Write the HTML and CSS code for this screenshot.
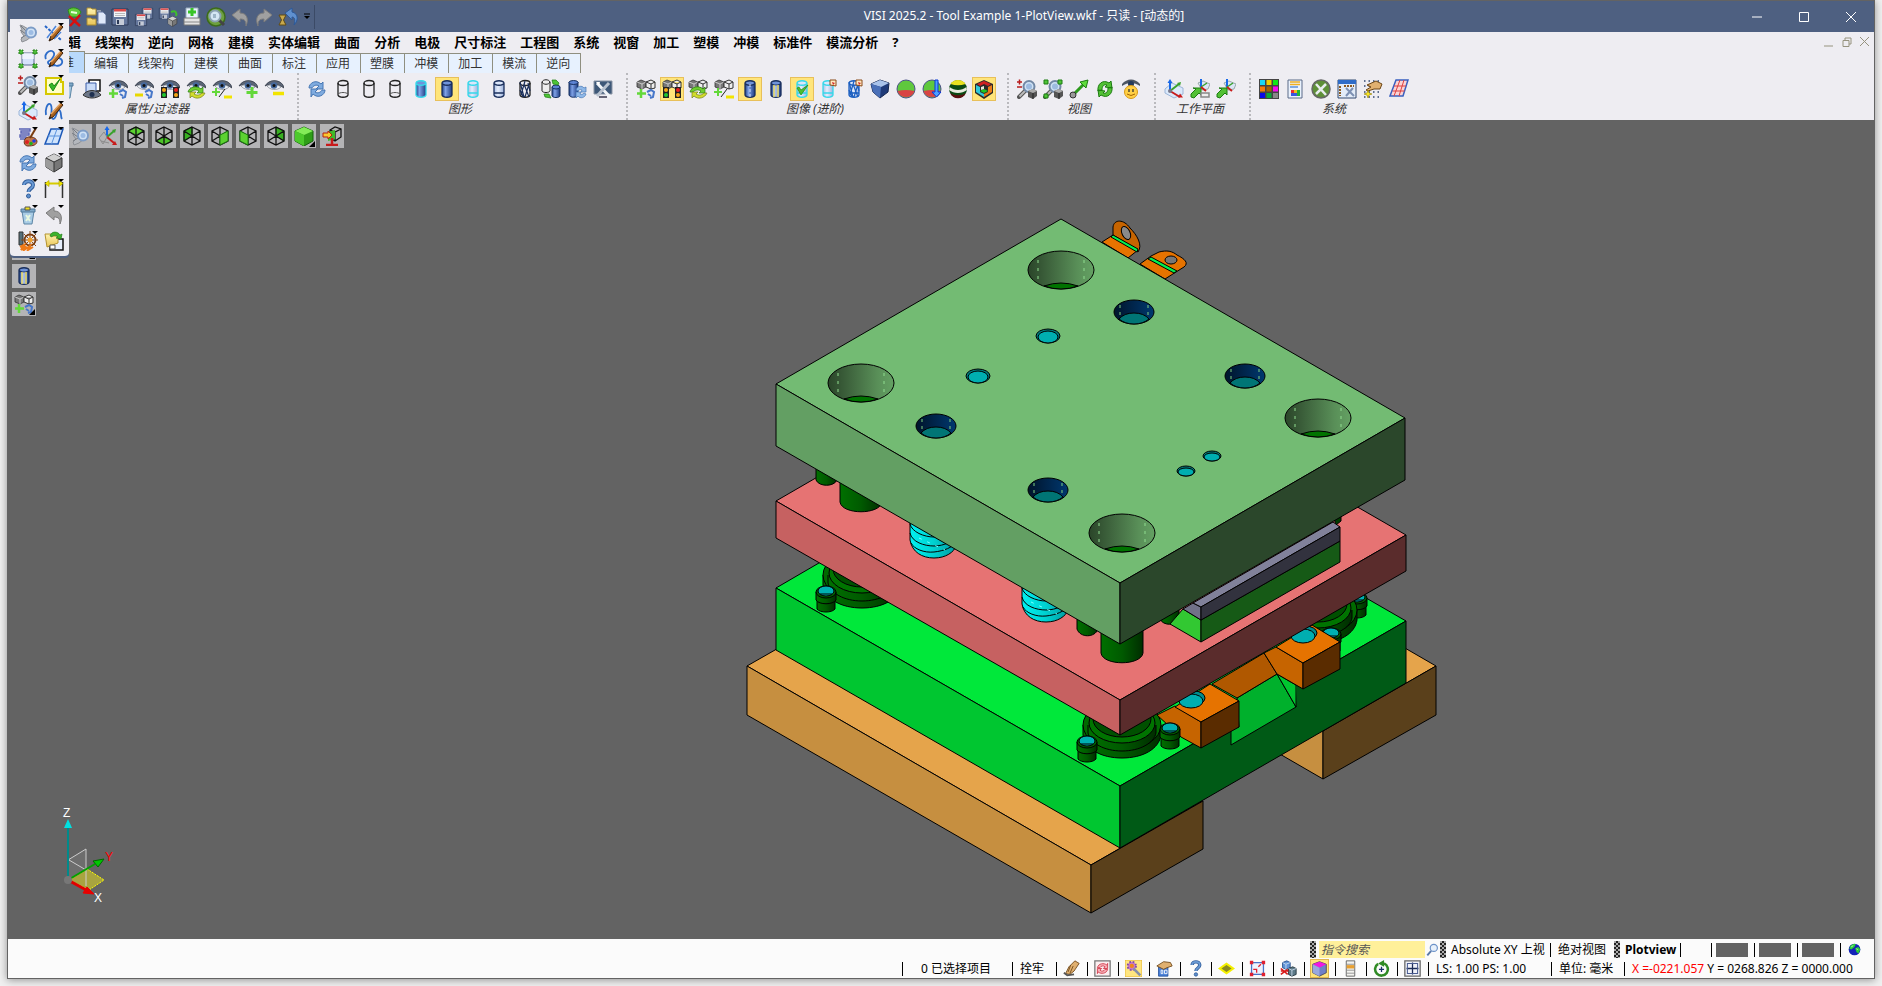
FILE: index.html
```html
<!DOCTYPE html>
<html lang="zh-CN">
<head>
    <meta charset="UTF-8">
    <meta name="viewport" content="width=device-width, initial-scale=1.0">
    <title>VISI 2025.2 - Tool Example 1-PlotView.wkf</title>
    <link rel="stylesheet" href="styles.css">
</head>
<body>

    <!-- Icon sprite -->
    <svg class="sprite" aria-hidden="true">
        <defs>
            <linearGradient id="g-blue"><stop offset="0" stop-color="#1f3f86"/><stop offset=".35" stop-color="#7fa2e6"/><stop offset="1" stop-color="#1c3a80"/></linearGradient>
            <linearGradient id="g-pale"><stop offset="0" stop-color="#a9bde4"/><stop offset=".4" stop-color="#e6eefc"/><stop offset="1" stop-color="#9db3de"/></linearGradient>
            <linearGradient id="g-gray" x2="0" y2="1"><stop offset="0" stop-color="#d5d5d5"/><stop offset="1" stop-color="#707070"/></linearGradient>
            <linearGradient id="g-hole"><stop offset="0" stop-color="#2a4529"/><stop offset=".25" stop-color="#3a5d39"/><stop offset=".75" stop-color="#598f58"/><stop offset="1" stop-color="#64a163"/></linearGradient>
            <linearGradient id="g-well"><stop offset="0" stop-color="#00142b"/><stop offset="1" stop-color="#00386f"/></linearGradient>
            <linearGradient id="g-post"><stop offset="0" stop-color="#007000"/><stop offset=".5" stop-color="#005a00"/><stop offset="1" stop-color="#002d00"/></linearGradient>
            <linearGradient id="g-spring"><stop offset="0" stop-color="#00f0f0"/><stop offset=".5" stop-color="#00d2d2"/><stop offset="1" stop-color="#009aa0"/></linearGradient>
            <linearGradient id="g-folder" x2="0" y2="1"><stop offset="0" stop-color="#fff3b0"/><stop offset="1" stop-color="#e8c558"/></linearGradient>
        </defs>

        <symbol id="i-lens" viewBox="0 0 20 20"><path d="M9 11L2 18" stroke="#555" stroke-width="4" stroke-linecap="round"/><path d="M9 11L2.500 17.500" stroke="#bbb" stroke-width="2"/><circle cx="12" cy="7.500" r="5.500" fill="#cfe2f5" stroke="#7288a5" stroke-width="2"/><circle cx="12" cy="7.500" r="3" fill="#9dbbe0"/></symbol>
        <symbol id="i-hand" viewBox="0 0 20 20"><path d="M2 2l3 1 7 4 2 6-5 4-5 2-1-3 3-3-3-4 1-2z" fill="#b5b8bd" stroke="#8d9095"/><path d="M3 3l6 6M2 7l6 4M3 15l5-3" stroke="#777b82"/><circle cx="13" cy="9.500" r="5" fill="#cfe1f5" stroke="#7d9cc6" stroke-width="2"/><circle cx="13" cy="9.500" r="2.500" fill="#9dbce4"/></symbol>
        <symbol id="i-pencil" viewBox="0 0 20 20"><path d="M17 2l2 2-10 12-4 2 2-5z" fill="#a8621f" stroke="#40220a"/><path d="M17 2L7 13" stroke="#e7a45e" stroke-width="1.500"/><path d="M5 18l1.500-2.500 1 1z" fill="#222"/></symbol>
        <symbol id="i-lines" viewBox="0 0 20 20"><path d="M1 3l16 14" stroke="#2564c8" stroke-width="2" stroke-dasharray="3 1.500"/><path d="M3 15L12 3M10 16l7-7" stroke="#4d86dc" stroke-width="1.500"/></symbol>
        <symbol id="i-loops" viewBox="0 0 20 20"><path d="M2 10c-2-4 2-9 6-8 5 2 0 9-3 10s1 6 6 4M12 9c4-1 7 2 6 5s-7 4-8 1" fill="none" stroke="#2d6cc9" stroke-width="1.800"/></symbol>
        <symbol id="i-wave" viewBox="0 0 20 20"><path d="M2 14c-1-5 1-12 4-11 4 2-1 14 3 15 4 0 3-9 6-9 3 1 1 6 3 9" fill="none" stroke="#2d6cc9" stroke-width="1.800"/></symbol>
        <symbol id="i-fit" viewBox="0 0 20 20"><path d="M4 4h12v12H4z" fill="#d6e2fb" stroke="#5a6c92"/><path d="M4 4h12v6H4z" fill="#fff" opacity=".6"/><path d="M1 1h4v4H1zM15 1h4v4h-4zM1 15h4v4H1zM15 15h4v4h-4z" fill="#4fbd3a" stroke="#237a16" stroke-dasharray="2 1"/></symbol>
        <symbol id="i-minicube" viewBox="0 0 20 20"><path d="M11 12l5-2 4 2v5l-4 3-5-2z" fill="#555"/><path d="M11 12l5-2 4 2-4 2z" fill="#aaa"/><path d="M16 14v6" stroke="#222"/></symbol>
        <symbol id="i-pm" viewBox="0 0 20 20"><path d="M0 3h5M2.500 .5v5M0 8h5" stroke="#b81c1c" stroke-width="1.500"/></symbol>
        <symbol id="i-check" viewBox="0 0 20 20"><path d="M2 3h15v4h2v12H2z" fill="#ffffc8" stroke="#d6c800" stroke-width="2"/><path d="M5 10l4 6 7-12-6 7-2-3z" fill="#38b828" stroke="#1d8a12"/></symbol>
        <symbol id="i-axes" viewBox="0 0 20 20"><path d="M1 10l7-6 11 5v6l-9 4-9-5z" fill="#dbe9fb" stroke="#9cb5d9"/><path d="M6 12V2" stroke="#1868e8" stroke-width="2"/><path d="M3.500 4L6 0l2.500 4z" fill="#1868e8"/><path d="M6 12l9-7" stroke="#3aa22c" stroke-width="2"/><path d="M17 3l-1 4-3-3z" fill="#3aa22c"/><path d="M6 12l10 6" stroke="#c81b1b" stroke-width="2"/><path d="M19 18.500l-5 0 2-4z" fill="#c81b1b"/><circle cx="6" cy="12" r="2" fill="#778"/></symbol>
        <symbol id="i-triad" viewBox="0 0 20 20"><path d="M9 11V3" stroke="#1868e8" stroke-width="2"/><path d="M6.500 4L9 0l2.500 4z" fill="#1868e8"/><path d="M9 11l7-6" stroke="#3aa22c" stroke-width="2"/><path d="M18 3l-1 4-3-3z" fill="#3aa22c"/><path d="M9 11l7 6" stroke="#c81b1b" stroke-width="2"/><path d="M19 19l-5 0 3-4z" fill="#c81b1b"/><path d="M1 12l5-6 3 5-4 7zM3 15l8 2" fill="none" stroke="#8c8c8c"/></symbol>
        <symbol id="i-palette" viewBox="0 0 20 20"><path d="M1 2h11v2H3v2h8v2H2v2h6v2H2" fill="none" stroke="#5a63b5" stroke-width="1.400"/><path d="M7 12c3-4 11-2 12 2 0 4-4 5-9 5-3 0-5-3-3-7z" fill="#c0764a" stroke="#6b351a"/><circle cx="9" cy="15" r="2" fill="#e02020"/><circle cx="13" cy="16.500" r="1.800" fill="#20b020"/><circle cx="16" cy="14" r="1.800" fill="#2040e0"/><path d="M18 1l-6 10" stroke="#7a3d10" stroke-width="2"/></symbol>
        <symbol id="i-plane" viewBox="0 0 20 20"><path d="M7 2h12l-5 15H1z" fill="#cfe3fc" stroke="#1c58b8" stroke-width="1.500"/><path d="M13 2L7.500 17M4 9h12" stroke="#5b93dd"/></symbol>
        <symbol id="i-refresh" viewBox="0 0 20 20"><path d="M2 9c0-5 7-9 12-4l2-2v7H9l3-3c-3-2-6 0-7 2z" fill="#7fabdf" stroke="#4677b4"/><path d="M18 11c0 5-7 9-12 4l-2 3v-8h7l-3 3c3 2 6 0 7-2z" fill="#7fabdf" stroke="#4677b4"/></symbol>
        <symbol id="i-cube" viewBox="0 0 20 20"><path d="M2 5l8-4 8 4v9l-8 5-8-5z" fill="#777" stroke="#333"/><path d="M2 5l8-4 8 4-8 4z" fill="#d0d0d0"/><path d="M2 5l8 4v10l-8-5z" fill="#9b9b9b"/><path d="M2 5l8 4 8-4M10 9v10" fill="none" stroke="#333"/></symbol>
        <symbol id="i-help" viewBox="0 0 20 20"><path d="M6 6c0-5 9-5 9 0 0 4-4.500 3-4.500 7" fill="none" stroke="#335f9c" stroke-width="4"/><path d="M6 6c0-5 9-5 9 0 0 4-4.500 3-4.500 7" fill="none" stroke="#6a9bd6" stroke-width="2"/><circle cx="10.500" cy="17" r="2" fill="#5d8fcc" stroke="#335f9c"/></symbol>
        <symbol id="i-dim" viewBox="0 0 20 20"><path d="M1.500 3v16M18.500 3v16" stroke="#333" stroke-width="1.500"/><path d="M2 4.500h16" stroke="#d6cb00" stroke-width="2"/><path d="M1 4.500l4-3v6zM19 4.500l-4-3v6z" fill="#f2e600" stroke="#a89f00" stroke-width=".6"/></symbol>
        <symbol id="i-trash" viewBox="0 0 20 20"><path d="M4 6h12l-2 13H6z" fill="#a9cce6" stroke="#5d86a5"/><path d="M3 4h14v3H3z" fill="#7fa9c9" stroke="#50789a"/><path d="M7 2h5v3H7z" fill="#f0e020" stroke="#555"/><path d="M8 10l4 6M12 10l-4 6" stroke="#e8f8e0" stroke-width="2"/></symbol>
        <symbol id="i-undo" viewBox="0 0 20 20"><path d="M2 8l8-6v4c7 0 9 6 6 13 0-5-1-7-6-7v3z" fill="#a0a0a0" stroke="#7b7b7b"/></symbol>
        <symbol id="i-redo" viewBox="0 0 20 20"><path d="M18 8l-8-6v4c-7 0-9 6-6 13 0-5 1-7 6-7v3z" fill="#a0a0a0" stroke="#7b7b7b"/></symbol>
        <symbol id="i-wheel" viewBox="0 0 20 20"><path d="M1 1h4v13H1z" fill="#57707a" stroke="#333"/><circle cx="12" cy="9" r="5.500" fill="none" stroke="#7b3d10" stroke-width="1.800"/><path d="M12 0v18M3 9h17M6 3l12 12M18 3L6 15" stroke="#8b4a18"/><circle cx="12" cy="9" r="2.500" fill="#f0a030"/><path d="M2 16l4-2-3 5 5-4-2 4 6-4-2 4 5-3" fill="none" stroke="#ee7a18" stroke-width="2"/></symbol>
        <symbol id="i-open" viewBox="0 0 20 20"><path d="M9 8h10v11H6v-5z" fill="#e6eefc" stroke="#111" stroke-width="1.500"/><path d="M1 3h6l2 2h5v7l-11 4z" fill="url(#g-folder)" stroke="#b4922e"/><path d="M6 5c1-5 8-5 10-1l2-1-1 5-5-1 2-1c-2-2-5-2-6 0z" fill="#3db32c" stroke="#1d7c12" stroke-width=".7"/><path d="M6 14h5v4H6z" fill="#fff" stroke="#555"/></symbol>
        <symbol id="i-treex" viewBox="0 0 20 20"><path d="M6 3c4-4 11-2 13 2l-3 5H8z" fill="#63cb3c" stroke="#2c8a1a"/><path d="M9 5l6 1" stroke="#e8ffd8" stroke-width="2"/><path d="M7 9l11 10M18 8L8 19" stroke="#d81010" stroke-width="2.500"/></symbol>
        <symbol id="i-folders" viewBox="0 0 20 20"><path d="M1 1h4l1 1h4v6H1zM1 11h4l1 1h4v6H1z" fill="url(#g-folder)" stroke="#a98a30"/><path d="M11 4h4M11 15h3" stroke="#ddd"/><path d="M12 5h5l3 3v9h-8z" fill="#dfe9fa" stroke="#6a7da5"/></symbol>
        <symbol id="i-save" viewBox="0 0 20 20"><path d="M2 2h16v16H2z" fill="#65779c" stroke="#2c3956"/><path d="M4 2h12v8H4z" fill="#f3f5f8"/><path d="M4 2h12v2.500H4z" fill="#d94a4a"/><path d="M5 6.500h10M5 8.500h10" stroke="#aaa" stroke-width=".8"/><path d="M6 12h8v6H6z" fill="#c5cbd7"/><path d="M7 13h2v4H7z" fill="#2c3956"/></symbol>
        <symbol id="i-print" viewBox="0 0 20 20"><path d="M4 1h12v11H4z" fill="#e9f3fd" stroke="#9ab"/><path d="M2 11h16v7H2z" fill="#e4e4e4" stroke="#777"/><path d="M2 15h16" stroke="#888"/><path d="M10 1v8M6 5h8" stroke="#38c428" stroke-width="3"/></symbol>
        <symbol id="i-preview" viewBox="0 0 20 20"><circle cx="10" cy="10" r="9" fill="#6da03e" stroke="#3c6b1a" stroke-width="1.500"/><path d="M12 12l6 6" stroke="#444" stroke-width="3"/><circle cx="9" cy="9" r="5.500" fill="#d5e6f3" stroke="#8ba1b0" stroke-width="2"/><path d="M7 7h3v4H7z" fill="#9cb4c6"/></symbol>
        <symbol id="i-history" viewBox="0 0 20 20"><path d="M7 6l7-5v4c6 1 7 8 2 13 2-6 0-8-2-8v3z" fill="#5f90cf" stroke="#2d5998"/><path d="M1 8h7L5.500 13 8 18H1l2.500-5z" fill="#c9a94d" stroke="#5f4b15"/></symbol>

        <symbol id="i-eye" viewBox="0 0 20 20"><path d="M1 7C5 0 15 0 19 6l1 3C14 5 7 4 1 7z" fill="#5c6677" stroke="#2d3440" stroke-width=".7"/><path d="M3 7c4-2 10-2 14 1-4 4-11 3-14-1z" fill="#eef1f6" stroke="#6a717c" stroke-width=".6"/><circle cx="10" cy="6.500" r="3.300" fill="#46699c"/><circle cx="10" cy="6.500" r="1.500" fill="#111"/></symbol>
        <symbol id="i-solids" viewBox="0 0 20 20"><path d="M1 3l4-2 5 2v5l-4 2-5-2z" fill="#777" stroke="#333" stroke-width=".8"/><path d="M1 3l5 2 4-2M6 5v5" fill="none" stroke="#ddd" stroke-width=".8"/><path d="M10 3l5-2 4 2v6l-4 1-5-2zM10 3l5 2 4-2M15 5v5" fill="#eee" stroke="#333"/></symbol>
        <symbol id="o-plus" viewBox="0 0 20 20"><path d="M5 10v9M1 14.500h9" stroke="#63d83a" stroke-width="2.500"/></symbol>
        <symbol id="o-minus" viewBox="0 0 20 20"><path d="M1 16h8" stroke="#e8d800" stroke-width="3"/></symbol>
        <symbol id="o-bigplus" viewBox="0 0 20 20"><path d="M14 8v11M8.500 13.500h11" stroke="#63d83a" stroke-width="3"/></symbol>
        <symbol id="o-bigminus" viewBox="0 0 20 20"><path d="M9 14.500h11" stroke="#f2e400" stroke-width="3.500"/></symbol>
        <symbol id="o-half" viewBox="0 0 20 20"><path d="M4 9v8M0 13h8" stroke="#63d83a" stroke-width="2"/><path d="M13 10L7 18" stroke="#222"/><path d="M12 18h8" stroke="#f2e400" stroke-width="3"/></symbol>
        <symbol id="o-link" viewBox="0 0 20 20"><path d="M11 13l4-2 3 2-1 5-3 1M12 15l3 2" fill="none" stroke="#4777c9" stroke-width="2"/></symbol>
        <symbol id="o-lights" viewBox="0 0 20 20"><path d="M1 8h6v11H1zM13 8h6v11h-6z" fill="#222"/><circle cx="4" cy="11" r="2" fill="#f6a516"/><circle cx="4" cy="16" r="2" fill="#20c830"/><circle cx="16" cy="11" r="2" fill="#e81d1d"/><circle cx="16" cy="16" r="2" fill="#f6a516"/></symbol>
        <symbol id="o-cycle" viewBox="0 0 20 20"><path d="M2 13c1-5 9-7 13-3l2-2v6h-6l2-2c-3-2-6-1-8 1z" fill="#6fcf2f" stroke="#2c7f12" stroke-width=".7"/><path d="M19 14c-2 5-9 7-13 3l-2 2v-6h6l-2 2c3 2 6 1 8-1z" fill="#d2dd2c" stroke="#73801a" stroke-width=".7"/></symbol>
        <symbol id="i-pageeye" viewBox="0 0 20 20"><path d="M7 1h11v11H7z" fill="#fff" stroke="#111" stroke-width="1.500"/><path d="M4 4h10v10H4z" fill="#c9dbf8" stroke="#3a5da8"/><path d="M1 16c4-6 14-6 18 0-5 4-13 4-18 0z" fill="#6d7788" stroke="#333"/><circle cx="10" cy="15.500" r="2.500" fill="#1e3050"/></symbol>

        <symbol id="i-cyl-wire" viewBox="0 0 20 20"><path d="M5 4v12c1 3 9 3 10 0V4" fill="none" stroke="#222" stroke-width="1.300"/><ellipse cx="10" cy="4" rx="5" ry="2.500" fill="none" stroke="#222" stroke-width="1.300"/></symbol>
        <symbol id="o-cyl-base" viewBox="0 0 20 20"><path d="M5 15c2-2 8-2 10 0" fill="none" stroke="#555"/></symbol>
        <symbol id="i-cyl" viewBox="0 0 20 20"><path d="M5 4v12c1 3 9 3 10 0V4z" fill="url(#g-blue)"/><ellipse cx="10" cy="4" rx="5" ry="2.500" fill="#6f93da"/><path d="M5 4v12c1 3 9 3 10 0V4c-1-3-9-3-10 0 1 3 9 3 10 0" fill="none" stroke="currentColor" stroke-width="1.300"/></symbol>
        <symbol id="i-cyl-pale" viewBox="0 0 20 20"><path d="M5 4v12c1 3 9 3 10 0V4z" fill="url(#g-pale)"/><ellipse cx="10" cy="4" rx="5" ry="2.500" fill="#dbe6fa"/><path d="M5 4v12c1 3 9 3 10 0V4c-1-3-9-3-10 0 1 3 9 3 10 0M5 14h10" fill="none" stroke="currentColor" stroke-width="1.300"/></symbol>
        <symbol id="o-hatch" viewBox="0 0 20 20"><path d="M5 3l4 15M9 5l5 13M13 4l2 8M5 11l3 7M10 2l-4 14M14 5l-4 13" stroke="currentColor" stroke-width="1.200"/></symbol>
        <symbol id="o-stripe" viewBox="0 0 20 20"><path d="M8 6v12M12 6v12" stroke="#f7e36a" stroke-width="1.500"/><path d="M10 6v12" stroke="#dfe9fb"/></symbol>
        <symbol id="o-dash" viewBox="0 0 20 20"><path d="M10 5v13" stroke="#d5e2ff" stroke-dasharray="3 2"/></symbol>
        <symbol id="o-tick" viewBox="0 0 20 20"><path d="M5 9l4 7 7-10-7 5-2-3z" fill="#4cc030" stroke="#1d8a12" stroke-width=".7"/></symbol>
        <symbol id="o-tag" viewBox="0 0 20 20"><path d="M12 1h6v6l-6-1z" fill="#ffe8c0" stroke="#8b4a18"/><path d="M14 3l3 1-2 2z" fill="#d42a2a"/></symbol>
        <symbol id="i-cylswap" viewBox="0 0 20 20"><path d="M1 3v9c1 2 7 2 8 0V3c-1-3-7-3-8 0 1 3 7 3 8 0" fill="#eee" stroke="#222"/><path d="M11 8v9c1 2 7 2 8 0V8z" fill="url(#g-blue)" stroke="#16305f"/><ellipse cx="15" cy="8" rx="4" ry="2" fill="#5e84d4" stroke="#16305f"/><path d="M11 1h4l3 3-1 2-5-1zM3 15l5 0 2 4-6-1z" fill="#4fc436" stroke="#1d7c12" stroke-width=".7"/></symbol>
        <symbol id="i-cylload" viewBox="0 0 20 20"><path d="M2 3v13c1 3 8 3 9 0V3z" fill="url(#g-blue)" stroke="#16305f"/><ellipse cx="6.500" cy="3.500" rx="4.500" ry="2" fill="#5e84d4" stroke="#16305f"/><path d="M9 11c1-4 6-5 8-2l2-1v5h-5l1-2c-2-1-3 0-4 1zM19 15c-1 4-6 5-8 2l-2 2v-6h5l-1 2c2 1 3 0 4-1z" fill="#8fb8e8" stroke="#4677b4" stroke-width=".7"/></symbol>
        <symbol id="i-tools" viewBox="0 0 20 20"><path d="M1 2h18v13H1z" fill="#3e5878" stroke="#8a95a5"/><path d="M6 18h8" stroke="#667" stroke-width="2"/><path d="M4 4l13 14" stroke="#f2f5f8" stroke-width="3"/><path d="M16 4L4 17" stroke="#b9c3d0" stroke-width="3"/><path d="M3 3l4 0-1 4z" fill="#fff"/></symbol>
        <symbol id="i-gem" viewBox="0 0 20 20"><path d="M1 5l9-4 9 3-1 9-8 6-7-6z" fill="#1f3a78" stroke="#14254d"/><path d="M1 5l9-4 9 3-8 4z" fill="#a9c3ea"/><path d="M1 5l10 3-1 11-7-6z" fill="#4a70b8"/></symbol>
        <symbol id="i-ball" viewBox="0 0 20 20"><circle cx="10" cy="10" r="9" fill="#5fc83d" stroke="#4a4f88"/><path d="M1.500 12a9 9 0 0 0 17 0 20 9 0 0 0-17 0z" fill="#d84444"/></symbol>
        <symbol id="o-arrow" viewBox="0 0 20 20"><path d="M13 1h3v12h3l-4.500 5L10 13h3z" fill="#4da0ff" stroke="#0838d8"/></symbol>
        <symbol id="i-zebra" viewBox="0 0 20 20"><circle cx="10" cy="10" r="9" fill="#0b4a14"/><path d="M2.500 5a9 9 0 0 1 15 0 12 5 0 0 1-15 0z" fill="#e8e020"/><path d="M1.500 8c5 4 12 4 17 0l.4 3c-5 4-13 4-17.800 0z" fill="#e9ece0"/><path d="M2 14c5 3 11 3 16 0-3 7-13 7-16 0z" fill="#5a1010"/></symbol>
        <symbol id="i-hexbox" viewBox="0 0 20 20"><path d="M10 1l9 4v9l-9 6-9-6V5z" fill="#2a2a2a"/><path d="M10 2l7 3-3 2-4-2-4 2-3-2z" fill="#d02020"/><path d="M2 6l4 2v5l4 2v3l-8-5z" fill="#30c8d8"/><path d="M18 6l-4 2v5l-4 2v3l8-5z" fill="#e87a18"/><path d="M10 10l4 2-4 2-4-2z" fill="#20c820"/><path d="M7 8l3-1v3l-3 1z" fill="#e8e8d8"/></symbol>
        <symbol id="o-corners" viewBox="0 0 20 20"><path d="M1 1h4v4H1zM15 1h4v4h-4zM1 15h4v4H1z" fill="#4fc436" stroke="#1d7c12"/></symbol>
        <symbol id="i-vector" viewBox="0 0 20 20"><path d="M4 16L15 5" stroke="#2c9a1c" stroke-width="3"/><path d="M19 1l-2 8-6-6z" fill="#5fdc3c" stroke="#1d7c12"/><circle cx="4" cy="16" r="3" fill="#999" stroke="#333"/></symbol>
        <symbol id="i-rotate" viewBox="0 0 20 20"><path d="M3 12C2 5 8 0 14 4l2-2 1 7-7-1 2-2c-3-1-5 1-5 5zM17 8c1 7-5 12-11 8l-2 2-1-7 7 1-2 2c3 1 5-1 5-5z" fill="#52c135" stroke="#1d7c12"/></symbol>
        <symbol id="i-smile" viewBox="0 0 20 20"><path d="M1 5C6-1 14-1 19 5v2C13 3 7 3 1 7z" fill="#4c5563"/><circle cx="10" cy="5" r="3" fill="#243a5c"/><circle cx="10" cy="13" r="6.500" fill="#ffd046" stroke="#d99a17"/><path d="M8 10v3M12 10v3" stroke="#333" stroke-width="1.300"/><path d="M6 15q4 3 8 0" fill="none" stroke="#a66400"/></symbol>
        <symbol id="o-garrow" viewBox="0 0 20 20"><path d="M1 18l-0-3 5-5-3-1h8v7l-2-2-5 5z" fill="#52c135" stroke="#1d7c12"/></symbol>
        <symbol id="i-csys" viewBox="0 0 20 20"><path d="M8 4l5-2 7 3-2 5-6 1z" fill="#dbe6f6" stroke="#9aa"/><path d="M11 8V0" stroke="#1868e8" stroke-width="2"/><path d="M11 8l6-4" stroke="#3aa22c" stroke-width="1.500"/><path d="M11 8l5 4" stroke="#c81b1b" stroke-width="2"/></symbol>
        <symbol id="o-slab" viewBox="0 0 20 20"><path d="M11 14h8v4h-8z" fill="#eee" stroke="#888" stroke-width="1.500"/></symbol>
        <symbol id="i-colors" viewBox="0 0 20 20"><path d="M0 0h20v20H0z" fill="#444"/><path d="M1 1h5v5H1z" fill="#18d8f8"/><path d="M7.500 1h5v5h-5z" fill="#f0d000"/><path d="M14 1h5v5h-5z" fill="#10e818"/><path d="M1 7.500h5v5H1z" fill="#f87c08"/><path d="M7.500 7.500h5v5h-5z" fill="#a86000"/><path d="M14 7.500h5v5h-5z" fill="#f808f0"/><path d="M1 14h5v5H1z" fill="#0808e8"/><path d="M7.500 14h5v5h-5z" fill="#08a838"/><path d="M14 14h5v5h-5z" fill="#888"/></symbol>
        <symbol id="i-sheet" viewBox="0 0 20 20"><path d="M3 1h14v18H3z" fill="#eaf2fd" stroke="#5a6b88"/><path d="M5 3h10M5 5.500h10" stroke="#f0b020" stroke-width="1.500"/><path d="M5 8h8" stroke="#5a8fd8" stroke-width="1.500"/><path d="M6 11h3v3H6z" fill="#e83030"/><path d="M9 11h3v3H9z" fill="#f0c020"/><path d="M12 11h3v6h-3z" fill="#20b838"/><path d="M6 14h6v3H6z" fill="#3858e0"/></symbol>
        <symbol id="i-config" viewBox="0 0 20 20"><circle cx="10" cy="10" r="9" fill="#5e8f38" stroke="#666" stroke-width="1.500"/><path d="M5 5l10 11M15 5L5 15" stroke="#e8ecef" stroke-width="2.500"/></symbol>
        <symbol id="i-winconf" viewBox="0 0 20 20"><path d="M1 1h18v18H1z" fill="#e3ecf8" stroke="#334a70"/><path d="M1 1h18v4H1z" fill="#2f6cc8"/><path d="M3 7v10M7 7h10" stroke="#8b5a20" stroke-width="2" stroke-dasharray="2 1"/><path d="M9 9l8 8M16 9l-7 8" stroke="#7d90b3" stroke-width="2"/></symbol>
        <symbol id="i-gridhand" viewBox="0 0 20 20"><path d="M1 2h18M1 7h18M1 13h18M1 18h18" stroke="#31456f" stroke-width="1.500" stroke-dasharray="1.500 3"/><path d="M4 6l9-4 6 3-2 5-6 0-6 2-2-1 5-3z" fill="#e0b070" stroke="#6b4515"/><path d="M5 11l1 3 3 1-3 1-1 3-1-3-3-1 3-1z" fill="#f8e820" stroke="#907c00" stroke-width=".6"/></symbol>
        <symbol id="i-mesh" viewBox="0 0 20 20"><path d="M7 1h12l-5 16H1z" fill="#fbd4d4" stroke="#3a60c0" stroke-width="1.500"/><path d="M5 7h12M3.500 12h12M11 1L5 17M15 1l-5 16" stroke="#e04040"/></symbol>

        <symbol id="v-frame" viewBox="0 0 20 20"><path d="M10 1l8 4v10l-8 4-8-4V5zM2 5l8 5 8-5M10 10v9M10 1v9M2 15l8-5 8 5" fill="none" stroke="#111" stroke-width="1.300"/></symbol>
        <symbol id="v-top" viewBox="0 0 20 20"><path d="M10 1l8 4-8 4-8-4z" fill="#5cd231" stroke="#1b7a10"/></symbol>
        <symbol id="v-bottom" viewBox="0 0 20 20"><path d="M10 11l8 4-8 4-8-4z" fill="#4cc428" stroke="#1b7a10"/></symbol>
        <symbol id="v-back" viewBox="0 0 20 20"><path d="M2 5l8-4v9l-8 5z" fill="#38b020" stroke="#1b7a10"/></symbol>
        <symbol id="v-right" viewBox="0 0 20 20"><path d="M10 9l8-4v10l-8 4z" fill="#5cd231" stroke="#1b7a10"/></symbol>
        <symbol id="v-left" viewBox="0 0 20 20"><path d="M2 5l8 4v10l-8-4z" fill="#5cd231" stroke="#1b7a10"/></symbol>
        <symbol id="v-rear" viewBox="0 0 20 20"><path d="M10 1l8 4v10l-8-5z" fill="#38b020" stroke="#1b7a10"/></symbol>
        <symbol id="v-iso" viewBox="0 0 20 20"><path d="M1 5l9-4 9 4v10l-9 5-9-5z" fill="#2f9e18" stroke="#15610b"/><path d="M1 5l9-4 9 4-9 4z" fill="#83ec58"/><path d="M1 5l9 4v11l-9-5z" fill="#4cc92c"/></symbol>
        <symbol id="v-pick" viewBox="0 0 20 20"><path d="M8 4l5-3 6 2v8l-6 4-5-3zM8 4l5 2 6-3M13 6v9" fill="none" stroke="#111" stroke-width="1.300"/><path d="M6 6l7-2v9l-7 2z" fill="#3fb828"/><path d="M10 12v7M4 19h12" stroke="#c81b1b" stroke-width="2.500"/><path d="M1 7h5V5l4 4-4 4v-2H1z" fill="#f8c830" stroke="#b82010"/></symbol>

        <symbol id="s-glove" viewBox="0 0 20 20"><path d="M14 1l5 3-6 9-5 4-5-1 4-8z" fill="#e0b070" stroke="#6b4515"/><path d="M9 6l-3 8M12 7l-4 9" stroke="#6b4515"/><path d="M1 15l4 3 8-1" fill="none" stroke="#555" stroke-width="2"/></symbol>
        <symbol id="s-cycle" viewBox="0 0 20 20"><path d="M1 1h18v18H1z" fill="#fbeef0" stroke="#777" stroke-width="1.500"/><path d="M4 9c1-5 8-6 11-3l1-2v6h-5l2-2c-2-2-5-1-6 1zM16 11c-1 5-8 6-11 3l-1 2v-6h5l-2 2c2 2 5 1 6-1z" fill="#f7b0b8" stroke="#d03848"/></symbol>
        <symbol id="s-wand" viewBox="0 0 20 20"><path d="M0 0h20v20H0z" fill="#ffe680" stroke="#e0b030"/><circle cx="8" cy="7" r="5" fill="#c878c8" stroke="#7f4aa8" stroke-dasharray="2 2" stroke-width="2"/><circle cx="8" cy="7" r="2.500" fill="#f08818"/><path d="M10 10l8 8" stroke="#8890a8" stroke-width="3"/></symbol>
        <symbol id="s-note" viewBox="0 0 20 20"><path d="M3 8h11v11H3z" fill="#4a80d8" stroke="#24509c"/><path d="M6 12h2v4H6zM10 12h3v4h-3z" fill="none" stroke="#fff"/><path d="M1 7l8-5 8 1 2 4-6 2-4 2z" fill="#e0b070" stroke="#6b4515"/></symbol>
        <symbol id="s-diamond" viewBox="0 0 20 20"><path d="M10 3l10 7-10 7-10-7z" fill="#f4f000"/><path d="M10 6l6 4-6 4-6-4z" fill="#8a8a20"/></symbol>
        <symbol id="s-region" viewBox="0 0 20 20"><path d="M3 3h14v14H3z" fill="#eef3fd" stroke="#4a72c8" stroke-width="1.500"/><path d="M1 1h4v4H1zM15 1h4v4h-4zM1 15h4v4H1zM15 15h4v4h-4z" fill="#e02030"/><path d="M5 11h4v4M11 8l3-3" fill="none" stroke="#e02030" stroke-width="1.500"/></symbol>
        <symbol id="s-cubes" viewBox="0 0 20 20"><path d="M3 3l5-2 4 2v6l-5 2-4-2z" fill="#5f93d8" stroke="#224a88"/><path d="M10 10l5-2 4 2v7l-5 2-4-2z" fill="#5d7a88" stroke="#1d3038"/><path d="M10 10l4 2 5-2M14 12v7M3 3l4 2 5-2M7 5v6" fill="none" stroke="#cde"/><path d="M1 10l8 7M1 13h9M9 11l-8 6" stroke="#d81818" stroke-width="1.800"/></symbol>
        <symbol id="s-magcube" viewBox="0 0 20 20"><path d="M2 5l8-3 8 3v10l-8 4-8-4z" fill="#6f7fc8" stroke="#445"/><path d="M2 5l8-3 8 3-8 4z" fill="#f018e0"/><path d="M2 5l8 4v10l-8-4z" fill="#98a8e0"/></symbol>
        <symbol id="s-list" viewBox="0 0 20 20"><path d="M5 1h10v18H5z" fill="#f4f4f0" stroke="#555"/><path d="M5 5h10M5 12h10M5 15.500h10" stroke="#888"/><path d="M5.500 6h9v4h-9z" fill="#e8a030"/></symbol>
        <symbol id="s-spin" viewBox="0 0 20 20"><path d="M13 4a7.500 7.500 0 1 1-7 .5" fill="none" stroke="#2f8a24" stroke-width="3"/><path d="M13 0v8L6 4z" fill="#2f8a24"/><path d="M10 8v6M7 11h6" stroke="#17306a" stroke-width="1.500"/></symbol>
        <symbol id="s-grid" viewBox="0 0 20 20"><path d="M1 1h18v18H1z" fill="#f0f3fa" stroke="#666" stroke-width="1.500"/><path d="M10 3v14M3 10h14" stroke="#1c2c58" stroke-width="1.500"/><path d="M4 4h12v12H4z" fill="none" stroke="#4a5c90" stroke-width="1.200"/></symbol>
        <symbol id="s-globe" viewBox="0 0 20 20"><circle cx="10" cy="10" r="9" fill="#1424b8"/><path d="M4 4c3-3 7-3 8-2l-2 4-5 4-3-1zM11 8l5-2 3 4-3 6-3-2z" fill="#2ccf38"/><path d="M5 6l3-2M13 9l2 1" stroke="#fff"/></symbol>
        <symbol id="s-find" viewBox="0 0 20 20"><path d="M8 12l-6 7" stroke="#5a79a8" stroke-width="3"/><circle cx="12" cy="7.500" r="5.500" fill="#e8f1fb" stroke="#6c92c8" stroke-width="1.800"/></symbol>
    </svg>

    <div class="app">

        <!-- Title bar -->
        <header class="titlebar">
            <div class="quick">
                <button title="关闭"><svg><use href="#i-treex"/></svg></button>
                <button title="打开"><svg><use href="#i-folders"/></svg></button>
                <button title="保存"><svg><use href="#i-save"/></svg></button>
                <button title="全部保存"><svg viewBox="0 0 20 20"><use href="#i-save" x="7" y="0" width="13" height="13"/><use href="#i-save" x="0" y="6" width="14" height="14"/></svg></button>
                <button title="另存为"><svg viewBox="0 0 20 20"><use href="#i-save" x="0" y="0" width="13" height="13"/><use href="#i-cube" x="9" y="9" width="11" height="11"/><path d="M13 5c5-2 6 1 5 4" fill="none" stroke="#3fbf2c" stroke-width="2"/></svg></button>
                <button title="打印"><svg><use href="#i-print"/></svg></button>
                <button title="打印预览"><svg><use href="#i-preview"/></svg></button>
                <button title="撤销"><svg><use href="#i-undo"/></svg></button>
                <button title="重做"><svg><use href="#i-redo"/></svg></button>
                <button title="历史"><svg><use href="#i-history"/></svg></button>
                <button class="more" title="更多"><svg viewBox="0 0 8 8"><path d="M1 1h6" stroke="#000"/><path d="M1 3h6L4 6z"/></svg></button>
            </div>
            <h1 class="title">VISI 2025.2 - Tool Example 1-PlotView.wkf - 只读 - [动态的]</h1>
            <div class="winbtns">
                <button title="最小化"><svg viewBox="0 0 12 12"><path d="M1 6h10"/></svg></button>
                <button title="最大化"><svg viewBox="0 0 12 12"><path d="M1.500 1.500h9v9h-9z"/></svg></button>
                <button title="退出"><svg viewBox="0 0 12 12"><path d="M1 1l10 10M11 1L1 11"/></svg></button>
            </div>
        </header>

        <!-- Menu -->
        <nav class="menubar">
            <a href="#">文件</a><a href="#">编辑</a><a href="#">线架构</a><a href="#">逆向</a><a href="#">网格</a><a href="#">建模</a><a href="#">实体编辑</a><a href="#">曲面</a><a href="#">分析</a><a href="#">电极</a><a href="#">尺寸标注</a><a href="#">工程图</a><a href="#">系统</a><a href="#">视窗</a><a href="#">加工</a><a href="#">塑模</a><a href="#">冲模</a><a href="#">标准件</a><a href="#">模流分析</a><a href="#">?</a>
            <div class="mdibtns">
                <button title="最小化视窗"><svg viewBox="0 0 12 12"><path d="M1 10h9"/></svg></button>
                <button title="还原视窗"><svg viewBox="0 0 12 12"><path d="M4 4V2h6v6H8M2 4.500h6v6H2z"/></svg></button>
                <button title="关闭视窗"><svg viewBox="0 0 12 12"><path d="M1 1l9 9M10 1l-9 9"/></svg></button>
            </div>
        </nav>

        <!-- Ribbon tabs -->
        <nav class="tabs">
            <a class="active" href="#">标准</a><a href="#">编辑</a><a href="#">线架构</a><a href="#">建模</a><a href="#">曲面</a><a href="#">标注</a><a href="#">应用</a><a href="#">塑膜</a><a href="#">冲模</a><a href="#">加工</a><a href="#">模流</a><a href="#">逆向</a>
        </nav>

        <!-- Ribbon -->
        <div class="ribbon">
            <section class="group first">
                <div class="tools">
                    <button title="属性"><svg><use href="#i-palette"/></svg></button>
                    <button title="过滤器"><svg><use href="#i-trash"/></svg></button>
                    <button title="图层"><svg><use href="#i-pageeye"/></svg></button>
                    <button title="添加关联"><svg><use href="#i-eye"/><use href="#o-plus"/><use href="#o-link"/></svg></button>
                    <button title="移除关联"><svg><use href="#i-eye"/><use href="#o-minus"/><use href="#o-link"/></svg></button>
                    <button title="显示状态"><svg><use href="#i-eye"/><use href="#o-lights"/></svg></button>
                    <button title="反转显示"><svg><use href="#i-eye"/><use href="#o-cycle"/></svg></button>
                    <button title="显示或隐藏"><svg><use href="#i-eye"/><use href="#o-half"/></svg></button>
                    <button title="显示"><svg><use href="#i-eye"/><use href="#o-bigplus"/></svg></button>
                    <button title="隐藏"><svg><use href="#i-eye"/><use href="#o-bigminus"/></svg></button>
                </div>
                <h2>属性/过滤器</h2>
            </section>
            <section class="group">
                <div class="tools">
                    <button title="重画"><svg><use href="#i-refresh"/></svg></button>
                    <button title="线框"><svg><use href="#i-cyl-wire"/><use href="#o-cyl-base"/></svg></button>
                    <button title="消隐"><svg><use href="#i-cyl-wire"/></svg></button>
                    <button title="虚线消隐"><svg><use href="#i-cyl-wire"/><use href="#o-cyl-base"/></svg></button>
                    <button title="着色" class="cyan"><svg><use href="#i-cyl"/></svg></button>
                    <button title="着色带边" class="on"><svg><use href="#i-cyl"/></svg></button>
                    <button title="透明" class="cyan"><svg><use href="#i-cyl-pale"/></svg></button>
                    <button title="透明带边"><svg><use href="#i-cyl-pale"/></svg></button>
                    <button title="网格显示"><svg><use href="#i-cyl-wire"/><use href="#o-hatch"/></svg></button>
                    <button title="切换显示"><svg><use href="#i-cylswap"/></svg></button>
                    <button title="更新着色"><svg><use href="#i-cylload"/></svg></button>
                    <button title="图形设置"><svg><use href="#i-tools"/></svg></button>
                </div>
                <h2>图形</h2>
            </section>
            <section class="group">
                <div class="tools">
                    <button title="添加实体"><svg><use href="#i-solids"/><use href="#o-plus"/><use href="#o-link"/></svg></button>
                    <button title="实体状态" class="on"><svg><use href="#i-solids"/><use href="#o-lights"/></svg></button>
                    <button title="反转实体"><svg><use href="#i-solids"/><use href="#o-cycle"/></svg></button>
                    <button title="增减实体"><svg><use href="#i-solids"/><use href="#o-half"/></svg></button>
                    <button title="中心线" class="on"><svg><use href="#i-cyl"/><use href="#o-dash"/></svg></button>
                    <button title="条纹"><svg><use href="#i-cyl"/><use href="#o-stripe"/></svg></button>
                    <button title="确认" class="on cyan"><svg><use href="#i-cyl-pale"/><use href="#o-tick"/></svg></button>
                    <button title="标记" class="cyan"><svg><use href="#i-cyl-pale"/><use href="#o-tag"/></svg></button>
                    <button title="标记网格" class="blue"><svg><use href="#i-cyl-pale"/><use href="#o-hatch"/><use href="#o-tag"/></svg></button>
                    <button title="切面"><svg><use href="#i-gem"/></svg></button>
                    <button title="拔模分析"><svg><use href="#i-ball"/></svg></button>
                    <button title="拔模方向"><svg><use href="#i-ball"/><use href="#o-arrow"/></svg></button>
                    <button title="斑马纹"><svg><use href="#i-zebra"/></svg></button>
                    <button title="面颜色" class="on"><svg><use href="#i-hexbox"/></svg></button>
                </div>
                <h2>图像 (进阶)</h2>
            </section>
            <section class="group">
                <div class="tools">
                    <button title="动态缩放"><svg><use href="#i-lens"/><use href="#i-minicube"/><use href="#i-pm"/></svg></button>
                    <button title="缩放全部"><svg><use href="#i-lens"/><use href="#i-minicube"/><use href="#o-corners"/></svg></button>
                    <button title="视图方向"><svg><use href="#i-vector"/></svg></button>
                    <button title="旋转"><svg><use href="#i-rotate"/></svg></button>
                    <button title="视图"><svg><use href="#i-smile"/></svg></button>
                </div>
                <h2>视图</h2>
            </section>
            <section class="group">
                <div class="tools">
                    <button title="工作平面"><svg><use href="#i-axes"/></svg></button>
                    <button title="对齐平面"><svg><use href="#i-csys"/><use href="#o-garrow"/><use href="#o-slab"/></svg></button>
                    <button title="移动平面"><svg><use href="#i-csys"/><use href="#o-garrow"/></svg></button>
                </div>
                <h2>工作平面</h2>
            </section>
            <section class="group">
                <div class="tools">
                    <button title="颜色"><svg><use href="#i-colors"/></svg></button>
                    <button title="属性表"><svg><use href="#i-sheet"/></svg></button>
                    <button title="系统设置"><svg><use href="#i-config"/></svg></button>
                    <button title="界面设置"><svg><use href="#i-winconf"/></svg></button>
                    <button title="栅格"><svg><use href="#i-gridhand"/></svg></button>
                    <button title="网格面"><svg><use href="#i-mesh"/></svg></button>
                </div>
                <h2>系统</h2>
            </section>
        </div>

        <!-- 3D view -->
        <main class="view">
            <svg class="model" viewBox="8 120 1866 819">
                <defs>
                    <g id="bighole">
                        <ellipse rx="33" ry="19" fill="url(#g-hole)"/>
                        <path d="M-17 16Q0 10 17 16Q0 22-17 16z" fill="#007300"/>
                        <path d="M-23-10v24M23-10v24" stroke="#8fdc8f" stroke-dasharray="3 5"/>
                    </g>
                    <g id="bluehole">
                        <ellipse rx="20" ry="12" fill="url(#g-well)"/>
                        <path d="M-15 7Q-10 1 0 1T15 7Q9 12 0 12T-15 7z" fill="#007575"/>
                        <path d="M-14-7v12M14-7v12" stroke="#7fd07f" stroke-dasharray="3 4"/>
                    </g>
                    <g id="pinhole">
                        <ellipse rx="12" ry="7" fill="#008080"/>
                        <ellipse cy="1" rx="10" ry="6" fill="#00aeb0"/>
                    </g>
                    <g id="bolt">
                        <path d="M-9 8v9c3 4 15 4 18 0V8z" fill="url(#g-post)"/>
                        <path d="M-10 0v8c3 5 17 5 20 0V0z" fill="url(#g-post)"/>
                        <ellipse rx="10" ry="6" fill="#006000"/>
                        <ellipse cy="-1" rx="8" ry="5" fill="#00b0b2"/>
                        <path d="M-6 2h12" fill="none"/>
                    </g>
                    <g id="bush">
                        <path d="M-39-8v10c2 14 18 23 39 23s37-9 39-23V-8z" fill="url(#g-post)"/>
                        <ellipse cy="-8" rx="39" ry="25" fill="#006a00"/>
                        <path d="M-34-8v8c2 10 16 18 34 18s32-8 34-18v-8" fill="url(#g-post)"/>
                        <ellipse cy="-10" rx="33" ry="20" fill="#007400"/>
                        <ellipse cy="-14" rx="29" ry="18" fill="#005000"/>
                    </g>
                    <g id="spring">
                        <path d="M-23-60V2c2 12 12 18 24 18s20-6 22-12v-68z" fill="url(#g-spring)"/>
                        <path d="M-23-22c2 8 14 13 24 13s20-5 22-9M-23-14c2 8 14 13 24 13s20-5 22-9M-23-5c2 9 14 13 24 13s20-5 22-9M-22 5c3 6 13 10 23 9s19-5 21-9" fill="none"/>
                        <path d="M-14 0l26 12M-6-8l26 12" stroke="#7ff" stroke-dasharray="3 6"/>
                    </g>
                    <path id="post" d="M-21-40V2c2 13 40 13 42 0v-42z" fill="url(#g-post)"/>
                </defs>
                <g class="solid">
                    <!-- Rails -->
                    <path fill="#c68f40" d="M1240 683l83 48v48l-83-48z"/>
                    <path fill="#e5a44b" d="M1323 731l113-65-83-48-113 65z"/>
                    <path fill="#5a401b" d="M1323 731l113-65v49l-113 64z"/>
                    <path fill="#e5a44b" d="M747 666l112-64 343 199-111 64z"/>
                    <path fill="#c68f40" d="M747 666l344 199v48L747 715z"/>
                    <path fill="#5a401b" d="M1091 865l112-64v48l-112 64z"/>

                    <!-- Lower plate -->
                    <path fill="#00e83a" d="M776 588l285-166 345 199-286 165z"/>
                    <path fill="#00c630" d="M776 588l344 198v62L776 650z"/>
                    <path fill="#005a16" d="M1120 786l286-165v62l-286 165z"/>
                    <use href="#bush" x="862" y="583"/>
                    <use href="#bolt" x="826" y="592"/>
                    <use href="#bolt" x="1357" y="598"/>
                    <use href="#bush" x="1318" y="618"/>
                    <use href="#bolt" x="1331" y="634"/>

                    <!-- Slide and clamps -->
                    <path fill="#00b02c" d="M1237 698l40-24 19 33-65 38v-17l8-1z"/>
                    <path fill="#00c630" d="M1277 674l19 11v22z"/>
                    <path fill="#005a16" stroke="none" d="M1296 686l8 4v10l-7 5z"/>
                    <path fill="#b05800" d="M1212 684l52-31 13 21-40 24z"/>
                    <path fill="#c66400" d="M1276 647l-12 6 13 21 26 15v-26z"/>
                    <path fill="#e67300" d="M1312 625l28 17-37 21-27-16z"/>
                    <path fill="#5a2c00" d="M1303 663l37-21v27l-37 20z"/>
                    <ellipse cx="1305" cy="633" rx="12" ry="7" fill="#008c8e"/>
                    <ellipse cx="1303" cy="636" rx="12" ry="7" fill="#00aeb0"/>
                    <use href="#bush" x="1122" y="733"/>
                    <path fill="#c66400" d="M1157 715l18-9 26 16v26l-20-11z"/>
                    <path fill="#e67300" d="M1210 684l29 17-38 21-26-15z"/>
                    <path fill="#5a2c00" d="M1201 722l38-21v26l-38 21z"/>
                    <ellipse cx="1194" cy="698" rx="11" ry="7" fill="#008c8e"/>
                    <ellipse cx="1191" cy="701" rx="12" ry="7" fill="#00aeb0"/>
                    <use href="#bolt" x="1087" y="742"/>
                    <use href="#bolt" x="1170" y="729"/>

                    <!-- Middle plate -->
                    <path fill="#e67373" d="M776 501l285-165 345 199-286 165z"/>
                    <path fill="#c66161" d="M776 501l344 199v35L776 538z"/>
                    <path fill="#5a2c2c" d="M1120 700l286-165v36l-286 164z"/>
                    <path fill="url(#g-post)" d="M816 460v20c3 7 18 7 21 0v-20z"/>
                    <use href="#post" x="861" y="500"/>
                    <use href="#spring" x="933" y="538"/>
                    <use href="#spring" x="1045" y="602"/>
                    <path fill="url(#g-post)" d="M1077 600v29c3 9 18 9 21 0v-29z"/>
                    <use href="#post" x="1122" y="651"/>
                    <path fill="url(#g-post)" d="M1160 590v29c3 7 16 7 19 0v-29z"/>
                    <path fill="#003c00" d="M1332 512h9v9l-5 4z"/>
                    <path fill="#32c832" d="M1183 609l18 11v22l-31-18z"/>
                    <path fill="#165a16" d="M1201 620l139-79v21l-139 80z"/>
                    <path fill="#717188" d="M1183 609l10-6 8 4v13z"/>
                    <path fill="#81819a" d="M1193 603l140-81 7 5-139 80z"/>
                    <path fill="#32323e" d="M1201 607l139-80v14l-139 79z"/>

                    <!-- Lifting tabs -->
                    <path fill="#c66400" d="M1113 236v-9c1-8 11-8 17 1 7 7 13 17 8 24z"/>
                    <path fill="#e67300" d="M1102 242l11-7 25 15-10 8z"/>
                    <path fill="#00f050" d="M1113 235l25 14-1 3-26-15z"/>
                    <ellipse cx="1126" cy="233" rx="4" ry="7" transform="rotate(-25 1126 233)" fill="#8a8a8a"/>
                    <path fill="#e67300" d="M1140 264l11-8 8-4c8-2 13-1 18 3 8 4 12 8 7 12l-8 5-11 7z"/>
                    <path fill="#00f050" d="M1151 257l26 14-3 2-26-14z"/>
                    <ellipse cx="1171" cy="260" rx="6" ry="4" fill="#777"/>

                    <!-- Upper plate -->
                    <path fill="#73bb73" d="M776 384l285-165 344 199-285 165z"/>
                    <path fill="#639f63" d="M776 384l344 199v61L776 446z"/>
                    <path fill="#2b472b" d="M1120 583l285-165v62l-285 164z"/>
                    <use href="#bighole" x="1061" y="270"/>
                    <use href="#bighole" x="861" y="383"/>
                    <use href="#bighole" x="1318" y="418"/>
                    <use href="#bighole" x="1122" y="533"/>
                    <use href="#bluehole" x="1134" y="312"/>
                    <use href="#bluehole" x="1245" y="376"/>
                    <use href="#bluehole" x="936" y="426"/>
                    <use href="#bluehole" x="1048" y="490"/>
                    <use href="#pinhole" x="1048" y="336"/>
                    <use href="#pinhole" x="978" y="376"/>
                    <ellipse cx="1212" cy="456" rx="9" ry="5" fill="#008080"/>
                    <ellipse cx="1212" cy="457" rx="8" ry="4" fill="#00aeb0"/>
                    <ellipse cx="1186" cy="471" rx="9" ry="5" fill="#008080"/>
                    <ellipse cx="1186" cy="472" rx="8" ry="4" fill="#00aeb0"/>
                </g>
            </svg>

            <div class="viewbar">
                <button title="平移"><svg><use href="#i-hand"/></svg></button>
                <button title="坐标"><svg><use href="#i-triad"/></svg></button>
                <button title="上视图"><svg><use href="#v-top"/><use href="#v-frame"/></svg></button>
                <button title="下视图"><svg><use href="#v-bottom"/><use href="#v-frame"/></svg></button>
                <button title="左后视图"><svg><use href="#v-back"/><use href="#v-frame"/></svg></button>
                <button title="右视图"><svg><use href="#v-frame"/><use href="#v-right"/></svg></button>
                <button title="前视图"><svg><use href="#v-frame"/><use href="#v-left"/></svg></button>
                <button title="后视图"><svg><use href="#v-rear"/><use href="#v-frame"/></svg></button>
                <button title="等轴测" class="corner"><svg><use href="#v-iso"/></svg></button>
                <button title="选面视图"><svg><use href="#v-pick"/></svg></button>
            </div>

            <div class="sidebar">
                <button title="渲染" class="corner"><svg><use href="#i-cube"/></svg></button>
                <button title="条纹着色"><svg><use href="#i-cyl"/><use href="#o-stripe"/></svg></button>
                <button title="添加实体" class="corner"><svg><use href="#i-solids"/><use href="#o-plus"/><use href="#o-link"/></svg></button>
            </div>

            <svg class="triad" viewBox="40 790 120 120">
                <path d="M68 860l18-11v32l-18-2z" fill="#777" fill-opacity=".5" stroke="#ccc"/>
                <path d="M69 880l18-11 17 11-15 10z" fill="#a8a440" stroke="#ff0" stroke-dasharray="2 1"/>
                <path d="M69 860l17 10v16" fill="none" stroke="#ccc"/>
                <path d="M68 880v-54" stroke="#008a8a" stroke-width="2"/>
                <path d="M68 819l4 9h-8z" fill="#00e0e0"/>
                <path d="M68 880l27-16" stroke="#00a000" stroke-width="2"/>
                <path d="M104 859l-6 8-5-6z" fill="#00c800" stroke="#006800"/>
                <path d="M68 880l20 11" stroke="#e00000" stroke-width="3"/>
                <path d="M94 894l-11-1 4-6z" fill="#e80000" stroke="#e80000"/>
                <circle cx="68" cy="880" r="4" fill="#777"/>
                <text x="63" y="817" fill="#fff">Z</text>
                <text x="105" y="861" fill="#f00">Y</text>
                <text x="94" y="902" fill="#fff">X</text>
            </svg>
        </main>

        <!-- Status bar -->
        <footer class="status">
            <div class="row">
                <span class="grip"></span>
                <input class="search" type="text" placeholder="指令搜索" aria-label="指令搜索">
                <button class="find" title="搜索"><svg><use href="#s-find"/></svg></button>
                <span class="grip"></span>
                <span class="cell plain wcs">Absolute XY 上视</span>
                <span class="cell vis">绝对视图</span>
                <span class="grip"></span>
                <span class="cell plain layer">Plotview</span>
                <span class="cell spare"></span>
                <span class="cell swatch"><i></i></span>
                <span class="cell swatch"><i></i></span>
                <span class="cell swatch"><i></i></span>
                <button class="cell globe" title="网络"><svg><use href="#s-globe"/></svg></button>
            </div>
            <div class="row">
                <span class="cell count">0 已选择项目</span>
                <span class="cell lock">拴牢</span>
                <button class="cell tile" title="捕捉"><svg><use href="#s-glove"/></svg></button>
                <button class="cell tile" title="循环"><svg><use href="#s-cycle"/></svg></button>
                <button class="cell tile" title="魔棒"><svg><use href="#s-wand"/></svg></button>
                <button class="cell tile" title="输入"><svg><use href="#s-note"/></svg></button>
                <button class="cell tile" title="帮助"><svg><use href="#i-help"/></svg></button>
                <button class="cell tile" title="平面"><svg><use href="#s-diamond"/></svg></button>
                <button class="cell tile" title="区域"><svg><use href="#s-region"/></svg></button>
                <button class="cell tile" title="实体捕捉"><svg><use href="#s-cubes"/></svg></button>
                <button class="cell tile lit" title="实体"><svg><use href="#s-magcube"/></svg></button>
                <button class="cell tile" title="列表"><svg><use href="#s-list"/></svg></button>
                <button class="cell tile" title="旋转中心"><svg><use href="#s-spin"/></svg></button>
                <button class="cell tile" title="视窗布局"><svg><use href="#s-grid"/></svg></button>
                <span class="cell scale">LS: 1.00 PS: 1.00</span>
                <span class="cell units">单位: 毫米</span>
                <span class="cell coords"><b>X =-0221.057</b> Y = 0268.826 Z = 0000.000</span>
            </div>
        </footer>

        <!-- Floating palette -->
        <aside class="palette">
            <button title="平移"><svg><use href="#i-hand"/></svg></button>
            <button title="直线" class="drop"><svg><use href="#i-lines"/><use href="#i-pencil"/></svg></button>
            <button title="适合窗口"><svg><use href="#i-fit"/></svg></button>
            <button title="圆弧" class="drop"><svg><use href="#i-loops"/><use href="#i-pencil"/></svg></button>
            <button title="缩放" class="drop"><svg><use href="#i-lens"/><use href="#i-minicube"/><use href="#i-pm"/></svg></button>
            <button title="校验" class="drop"><svg><use href="#i-check"/></svg></button>
            <button title="工作平面" class="drop"><svg><use href="#i-axes"/></svg></button>
            <button title="曲线" class="drop"><svg><use href="#i-wave"/><use href="#i-pencil"/></svg></button>
            <button title="图层" class="drop"><svg><use href="#i-palette"/></svg></button>
            <button title="曲面" class="drop"><svg><use href="#i-plane"/></svg></button>
            <button title="刷新" class="drop"><svg><use href="#i-refresh"/></svg></button>
            <button title="实体" class="drop"><svg><use href="#i-cube"/></svg></button>
            <button title="帮助" class="drop"><svg><use href="#i-help"/></svg></button>
            <button title="尺寸" class="drop"><svg><use href="#i-dim"/></svg></button>
            <button title="删除" class="drop"><svg><use href="#i-trash"/></svg></button>
            <button title="撤销" class="drop"><svg><use href="#i-undo"/></svg></button>
            <button title="导航" class="drop"><svg><use href="#i-wheel"/></svg></button>
            <button title="打开"><svg><use href="#i-open"/></svg></button>
        </aside>
    </div>

</body>
</html>
```
FILE: styles.css
```css
* {
    margin: 0;
    padding: 0;
    box-sizing: border-box;
}

body {
    font-family: 'Noto Sans', 'Noto Sans CJK SC', sans-serif;
    font-size: 12px;
    color: #000;
    background: #f0f0f0;
    height: 100vh;
    padding: 0 7px 7px;
    overflow: hidden;
}

a {
    color: inherit;
    text-decoration: none;
}

button {
    display: flex;
    align-items: center;
    justify-content: center;
    background: none;
    border: none;
    color: #1a2f5c;
}

button svg {
    width: 20px;
    height: 20px;
    flex: none;
}

.sprite {
    position: absolute;
    width: 0;
    height: 0;
}

.app {
    position: relative;
    display: flex;
    flex-direction: column;
    height: 100%;
    background: #eeedf2;
    border: 1px solid #636363;
    box-shadow: 0 1px 8px rgba(0, 0, 0, 0.4);
}

/* Title bar */
.titlebar {
    display: flex;
    height: 31px;
    background: #4e6081;
    color: #fff;
}

.quick {
    display: flex;
    padding: 4px 0 3px 52px;
}

.quick button {
    width: 24px;
}

.quick .more {
    width: 15px;
    border-right: 1px solid #3b4a66;
}

.quick .more svg {
    width: 8px;
    height: 8px;
}

.title {
    flex: 1;
    font-size: 12px;
    font-weight: normal;
    line-height: 30px;
    text-align: center;
    white-space: nowrap;
}

.winbtns {
    display: flex;
}

.winbtns button {
    width: 47px;
}

.winbtns svg,
.mdibtns svg {
    width: 12px;
    height: 12px;
    fill: none;
    stroke: #fff;
}

/* Menu */
.menubar {
    display: flex;
    gap: 14px;
    height: 19px;
    padding-left: 7px;
    font-size: 13px;
    font-weight: bold;
    line-height: 20px;
    white-space: nowrap;
}

.mdibtns {
    display: flex;
    margin-left: auto;
}

.mdibtns button {
    width: 18px;
}

.mdibtns svg {
    stroke: #96937f;
}

/* Ribbon tabs */
.tabs {
    display: flex;
    align-items: flex-end;
    height: 22px;
    padding-left: 33px;
}

.tabs a {
    height: 20px;
    padding: 0 10px 0 9px;
    background: #e7f1fe;
    border: solid #8f8f80;
    border-width: 1px 1px 0 0;
    color: #333;
    line-height: 19px;
}

.tabs .active {
    height: 22px;
    background: #b9d9fb;
    line-height: 22px;
}

/* Ribbon */
.ribbon {
    display: flex;
    height: 47px;
}

.group {
    padding: 4px 10px 0 5px;
    border-left: 2px dotted #b9b9bd;
}

.group.first {
    padding-left: 19px;
    border-left: none;
}

.tools {
    display: flex;
}

.tools button {
    width: 24px;
    height: 24px;
    margin: 0 1px;
}

.tools .on {
    background: #ffe57a;
    border: 1px solid #e8c05a;
}

.tools .cyan {
    color: #35d8ea;
}

.tools .blue {
    color: #1c5fc0;
}

.group h2 {
    font-size: 12px;
    font-weight: normal;
    font-style: italic;
    line-height: 16px;
    text-align: center;
    color: #333;
}

/* 3D view */
.view {
    position: relative;
    flex: 1;
    min-height: 0;
    background: #636363;
    overflow: hidden;
}

.model {
    display: block;
    width: 100%;
    height: 100%;
}

.solid {
    stroke: #000;
    stroke-width: 1;
    stroke-linejoin: round;
}

.viewbar,
.sidebar {
    position: absolute;
    display: flex;
    gap: 4px;
}

.viewbar {
    left: 60px;
    top: 4px;
}

.sidebar {
    left: 4px;
    top: 116px;
    flex-direction: column;
}

.viewbar button,
.sidebar button {
    position: relative;
    width: 24px;
    height: 24px;
    background: #b4b4b6;
}

.corner::after {
    content: '';
    position: absolute;
    right: 1px;
    bottom: 1px;
    border: 3px solid #000;
    border-top-color: transparent;
    border-left-color: transparent;
}

.triad {
    position: absolute;
    left: 32px;
    bottom: 29px;
    width: 120px;
    height: 120px;
    font: 12px 'Liberation Sans', sans-serif;
}

/* Status bar */
.status {
    height: 39px;
    padding-top: 1px;
    background: #fbfbfb;
    white-space: nowrap;
}

.row {
    display: flex;
    justify-content: flex-end;
    align-items: center;
    height: 19px;
}

.grip {
    width: 6px;
    height: 17px;
    background: repeating-conic-gradient(#222 0 25%, #aaa 0 50%) 0 0 / 4px 4px;
}

.search {
    width: 106px;
    height: 17px;
    margin-left: 3px;
    padding-left: 2px;
    border: none;
    background: #fff09a;
    font: italic 12px 'Noto Sans', 'Noto Sans CJK SC', sans-serif;
}

.search::placeholder {
    color: #555;
}

.find {
    width: 15px;
}

.find svg,
.globe svg {
    width: 13px;
    height: 13px;
}

.cell {
    position: relative;
    padding-left: 8px;
    line-height: 18px;
}

.cell::before {
    content: '';
    position: absolute;
    left: 0;
    top: 2px;
    bottom: 2px;
    width: 1px;
    background: #000;
}

.cell.plain::before {
    display: none;
}

.wcs {
    width: 104px;
    padding-left: 5px;
}

.vis {
    width: 64px;
}

.layer {
    width: 60px;
    padding-left: 5px;
    font-weight: bold;
}

.spare {
    width: 31px;
    height: 18px;
}

.swatch {
    width: 43px;
    height: 18px;
    padding: 2px 0 2px 5px;
}

.swatch i {
    display: block;
    width: 32px;
    height: 14px;
    background: #636363;
}

.globe {
    width: 34px;
    height: 18px;
    padding: 0 6px 0 0;
}

.count {
    width: 110px;
    padding-left: 19px;
}

.lock {
    width: 44px;
}

.tile {
    width: 31px;
    height: 18px;
    padding: 0;
}

.tile svg {
    width: 17px;
    height: 17px;
}

.lit svg {
    background: #ffe57a;
    outline: 1px solid #e0b550;
}

.scale {
    width: 123px;
}

.units {
    width: 73px;
}

.coords {
    width: 250px;
}

.coords b {
    font-weight: normal;
    color: #f00;
}

/* Floating palette */
.palette {
    position: absolute;
    left: 2px;
    top: 18px;
    display: grid;
    grid-template-columns: 26px 26px;
    grid-auto-rows: 26px;
    padding: 1px 2px 2px 5px;
    background: #eeedf2;
    border-radius: 0 0 4px 4px;
    box-shadow: 0 2px 0 #4e6081;
}

.palette button {
    position: relative;
}

.palette .drop::after {
    content: '';
    position: absolute;
    right: 3px;
    top: 3px;
    border: solid transparent;
    border-width: 3px 3px 0;
    border-top-color: #000;
}
```
